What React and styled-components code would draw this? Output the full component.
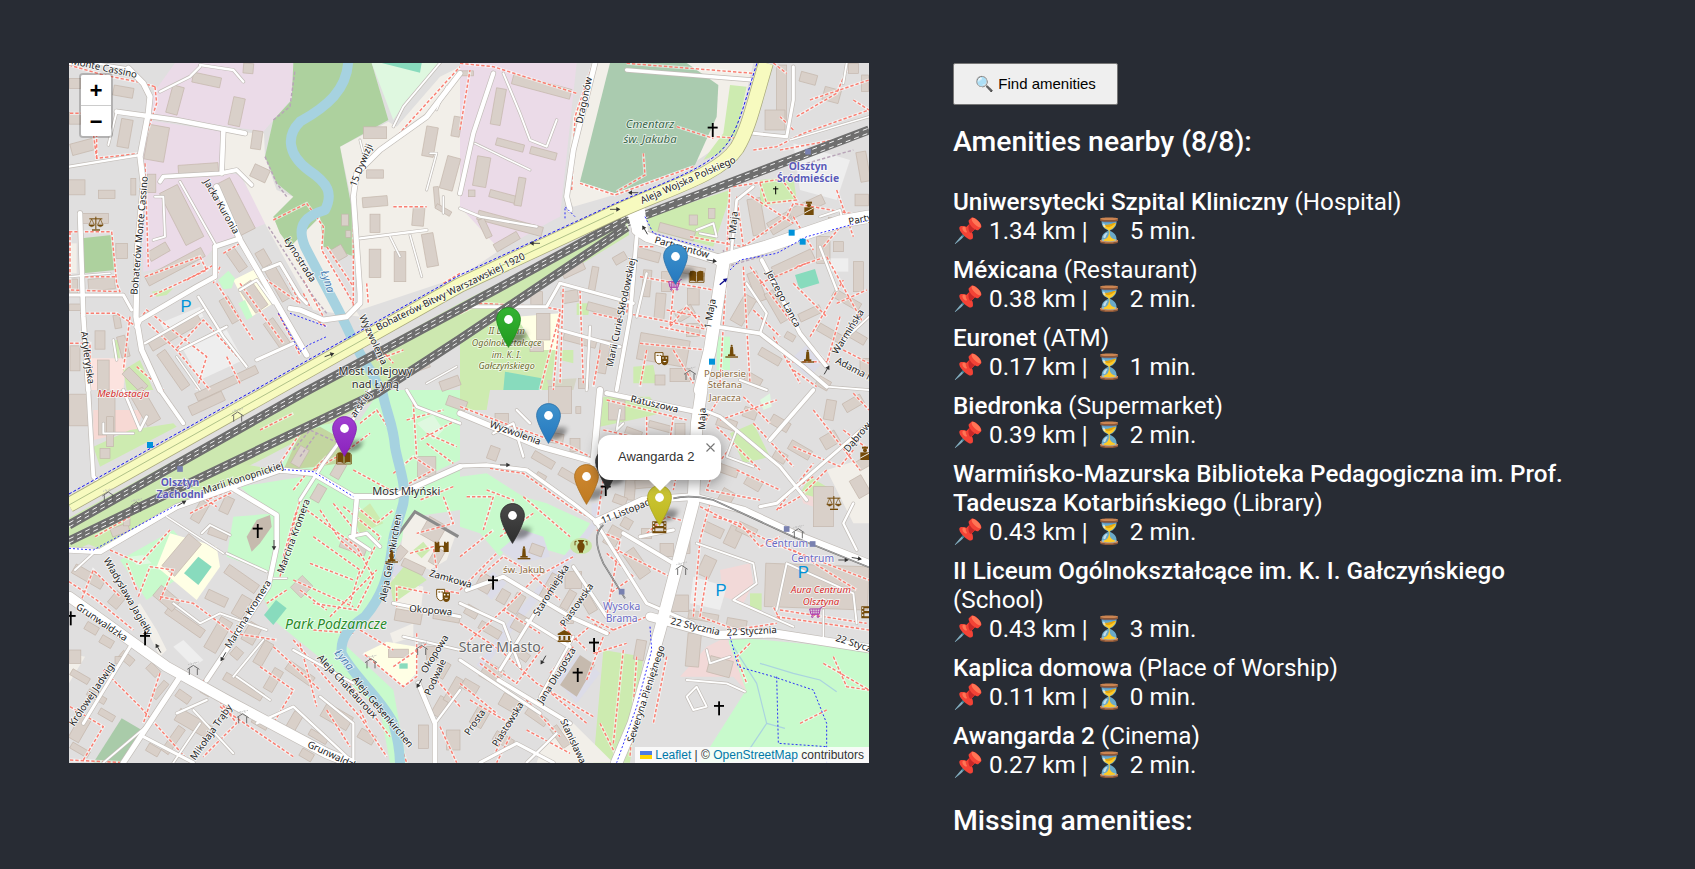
import React from "react";
import styled, { createGlobalStyle } from "styled-components";

const Global = createGlobalStyle`
  html, body { margin: 0; padding: 0; background: #282c34; }
  body { font-family: Roboto, "Liberation Sans", sans-serif; color: #fff; overflow: hidden; }
`;

const Page = styled.main`
  display: grid;
  grid-template-columns: 800px 625px;
  column-gap: 84px;
  padding: 63px 0 0 69px;
  min-height: 806px;
  background: #282c34;
`;
const MapFrame = styled.div`
  position: relative;
  width: 800px;
  height: 700px;
  overflow: hidden;
  background: #e0dfdf;
`;
const MapArt = styled.svg`
  display: block;
  width: 800px;
  height: 700px;
`;
const Side = styled.section`
  display: flex;
  flex-direction: column;
  align-items: flex-start;
`;
const FindButton = styled.button`
  width: 165px;
  height: 42px;
  padding: 0;
  background: #efefef;
  border: 1px solid #767676;
  border-radius: 2px;
  color: #000;
  font: 15px "Liberation Sans", Arial, sans-serif;
`;
const Heading = styled.h2`
  margin: ${(p) => p.$top}px 0 ${(p) => p.$bottom}px;
  font-size: 28.4px;
  line-height: 34px;
  font-weight: 500;
  color: #fff;
`;
const List = styled.div`
  display: flex;
  flex-direction: column;
  gap: 10px;
`;
const Item = styled.div`
  font-size: 24.24px;
  line-height: 29px;
  font-weight: 400;
`;
const Name = styled.strong`
  font-weight: 500;
`;

const ZoomBox = styled.div`
  position: absolute;
  left: 10px;
  top: 10px;
  border: 2px solid rgba(0, 0, 0, 0.2);
  border-radius: 4px;
  background-clip: padding-box;
`;
const ZoomBtn = styled.div`
  width: 30px;
  height: 30px;
  background: #fff;
  color: #000;
  font: bold 22px/35px "Liberation Mono", monospace;
  text-align: center;
  overflow: hidden;
  border-bottom: ${(p) => (p.$first ? "1px solid #ccc" : "none")};
  border-radius: ${(p) => (p.$first ? "2px 2px 0 0" : "0 0 2px 2px")};
`;
const Attribution = styled.div`
  position: absolute;
  right: 0;
  bottom: 0;
  padding: 0 5px;
  background: rgba(255, 255, 255, 0.8);
  color: #333;
  font: 12px/16px "Liberation Sans", Arial, sans-serif;
  white-space: nowrap;
`;
const AttrLink = styled.span`
  color: #0078a8;
`;
const Flag = styled.svg`
  display: inline-block;
  width: 12px;
  height: 8px;
  margin-right: 3px;
`;
const Pin = styled.svg`
  position: absolute;
  left: ${(p) => p.$x - 12.5}px;
  top: ${(p) => p.$y - 41}px;
  width: 45px;
  height: 41px;
  overflow: visible;
`;
const Popup = styled.div`
  position: absolute;
  left: 529px;
  top: 372px;
  width: 123px;
  height: 45px;
  box-sizing: border-box;
  padding: 13px 0 0 20px;
  background: #fff;
  border-radius: 12px;
  box-shadow: 0 3px 14px rgba(0, 0, 0, 0.4);
  color: #333;
  font: 13px/17px "Liberation Sans", Arial, sans-serif;
  white-space: nowrap;
  &::after {
    content: "";
    position: absolute;
    left: 50%;
    top: 100%;
    margin-left: -11px;
    border-left: 11px solid transparent;
    border-right: 11px solid transparent;
    border-top: 11px solid #fff;
  }
`;
const CloseX = styled.svg`
  position: absolute;
  right: 6px;
  top: 8px;
  width: 9px;
  height: 9px;
`;

/* map parts */
const Building = styled.rect`
  fill: #d9d0c9;
  stroke: #c4b6ab;
  stroke-width: 2;
`;
const Foot = styled.polyline`
  fill: none;
  stroke: ${(p) => (p.$faint ? "#b8a5b8" : "#fa7f72")};
  stroke-width: 4.4;
  stroke-dasharray: 10 6;
  stroke-linejoin: round;
`;
const FootCase = styled.polyline`
  fill: none;
  stroke: #fff;
  stroke-opacity: 0.6;
  stroke-width: 9;
`;
const Cycle = styled.polyline`
  fill: none;
  stroke: #1010ff;
  stroke-width: 2.6;
  stroke-dasharray: 6 6;
`;
const Stream = styled.polyline`
  fill: none;
  stroke: #aad3df;
  stroke-width: 3.5;
`;
const River = styled.path`
  fill: none;
  stroke: #a6d2e0;
  stroke-width: 30px;
  stroke-linecap: round;
  stroke-linejoin: round;
`;
const RoadCase = styled.polyline`
  fill: none;
  stroke: #c2bdb8;
  stroke-linecap: round;
  stroke-linejoin: round;
`;
const RoadFill = styled.polyline`
  fill: none;
  stroke: #fff;
  stroke-linecap: round;
  stroke-linejoin: round;
`;
const LABEL = {
  road: "fill:#222;font-size:29px;",
  place: "fill:#2c2c2c;font-size:33px;",
  bridge: "fill:#2c2c2c;font-size:33px;text-anchor:middle;",
  station: "fill:#5b5bb8;font-size:31px;font-weight:700;text-anchor:middle;",
  halt: "fill:#6a6ac4;font-size:31px;text-anchor:middle;",
  school: "fill:#6b6b2d;font-size:27px;font-style:italic;text-anchor:middle;",
  water: "fill:#4d80b3;font-size:33px;font-style:italic;",
  park: "fill:#2a8b2a;font-size:42px;font-style:italic;",
  brown: "fill:#8a6a3c;font-size:29px;text-anchor:middle;",
  red: "fill:#d42a2a;font-size:29px;font-style:italic;text-anchor:middle;",
  ceme: "fill:#39664a;font-size:34px;font-style:italic;text-anchor:middle;",
  town: "fill:#666;font-size:42px;text-anchor:end;",
};
const MapLabel = styled.text`
  font-family: "Noto Sans", sans-serif;
  paint-order: stroke;
  stroke: #fff;
  stroke-opacity: 0.75;
  stroke-width: 5px;
  ${(p) => LABEL[p.$kind]}
`;
const Pee = styled.text`
  font-family: "Liberation Sans", sans-serif;
  font-size: 50px;
  fill: #0092da;
  text-anchor: middle;
`;

const C = {
  pink: "#ebdbe8",
  beige: "#f2efe9",
  forest: "#add19e",
  park: "#c8facc",
  pale: "#dff8e0",
  pitch: "#88dbbd",
  cem: "#aacbaf",
  school: "#ffffe5",
  grass: "#cdebb0",
  lav: "#dcdce8",
  rose: "#f2d9d8",
  lot: "#eeeeee",
  olive: "#c3d6a0",
  church: "#c6baae",
};

const Q1 = {
  t: [-9, -13],
  areas: [
    [C.pink, "345,39 700,39 700,140 640,210 610,245 270,195 280,130"],
    [C.pink, "262,210 495,245 490,365 540,375 620,520 530,555 465,590 430,630 250,665 245,340"],
    [C.pink, "900,320 985,310 1085,385 1090,465 905,480"],
    [C.pink, "1190,490 1200,490 1200,515 1190,510"],
    [C.beige, "495,245 612,250 615,320 650,420 700,440 640,500 660,550 700,580 780,500 790,600 880,770 900,800 760,780 620,530 540,370 495,365"],
    [C.beige, "840,290 985,215 1010,230 1140,80 1200,50 1200,680 900,780 880,620 885,500"],
    [C.forest, "700,39 935,39 985,210 840,290 880,500 885,620 790,590 780,500 690,590 660,550 640,500 700,440 650,400 615,320 640,210 695,150"],
    [C.pale, "935,39 1140,39 1040,150 1000,210"],
    [C.pitch, "965,39 1085,39 1080,68"],
    [C.forest, "65,565 155,555 165,660 70,670"],
    [C.school, "520,690 590,655 640,760 575,800"],
    [C.park, "475,690 505,662 525,685 515,715 490,718"],
    [C.park, "535,760 555,750 578,800 560,810"],
    ["#fce3df", "85,925 200,925 190,1020 85,1020"],
    [C.grass, "190,960 240,930 280,1020 200,1020"],
    [C.grass, "275,725 340,715 320,735 290,740"],
    [C.beige, "30,580 50,580 50,670 30,670"],
    [C.lot, "300,820 420,770 430,800 320,850"],
    [C.lot, "370,900 500,840 550,930 420,990"],
    [C.grass, "160,870 175,870 180,925 162,925"],
  ],
  bld: [
    [440, 90, 85, 30, 12], [565, 55, 30, 30, 5], [345, 150, 35, 85, 15], [530, 185, 35, 85, 12], [190, 125, 60, 30, 10],
    [45, 100, 35, 30, 0], [45, 205, 35, 35, 0], [195, 250, 35, 85, 10], [70, 290, 75, 35, -15], [290, 280, 60, 105, 10],
    [415, 357, 120, 30, -4], [50, 412, 50, 45, 0], [140, 433, 50, 25, 0], [220, 410, 15, 50, 0], [275, 400, 25, 55, 0],
    [365, 495, 60, 175, -27], [525, 470, 50, 170, -27], [590, 270, 30, 55, 8], [600, 370, 50, 40, 25], [945, 248, 70, 35, 0],
    [1110, 275, 35, 90, 10], [945, 372, 50, 25, 0], [945, 455, 75, 30, -5], [1170, 370, 40, 100, 15], [945, 520, 30, 55, 0],
    [1075, 500, 35, 55, 5], [855, 510, 20, 35, 0], [835, 610, 40, 40, -30], [865, 552, 15, 20, 0], [945, 640, 35, 85, 0],
    [1020, 650, 35, 90, 0], [1110, 600, 35, 100, -10], [105, 505, 80, 30, 0], [185, 603, 35, 45, 0], [295, 605, 65, 30, -30],
    [125, 702, 80, 35, -5], [40, 712, 25, 50, 0], [45, 772, 35, 20, 0], [530, 630, 30, 70, -35], [610, 625, 30, 50, -30],
    [655, 700, 35, 110, -30], [580, 740, 45, 90, -35], [510, 780, 30, 80, -30], [650, 850, 35, 90, -35], [120, 870, 30, 55, 0],
    [45, 925, 30, 75, 0], [172, 815, 20, 40, -10], [190, 890, 25, 65, -15], [345, 650, 190, 30, -28], [345, 848, 170, 30, -30],
    [130, 975, 35, 90, 0], [225, 990, 80, 30, 45], [340, 960, 30, 130, -35], [500, 1000, 200, 25, -25], [1170, 1000, 60, 30, -20],
    [1130, 440, 15, 60, -5], [40, 40, 60, 10, 0], [1150, 480, 50, 15, 30], [1190, 230, 25, 60, 10], [1090, 950, 40, 15, -20],
  ],
  foot: [
    "27,45 130,75 230,95 285,110", "285,110 290,160 240,310 110,325 100,250", "255,340 265,650", "27,545 155,545 170,700 180,725 30,720",
    "75,680 170,680", "490,610 540,580 590,670 720,760", "640,510 740,460 790,530 785,600 880,760", "880,770 880,380 900,350 1000,270 1200,50",
    "920,700 925,760", "255,680 420,620 440,660 270,740", "230,820 260,780 440,920 410,1020", "265,820 350,900 450,1020", "350,895 430,810 560,950",
    "660,640 720,760", "655,790 720,915", "720,780 800,830", "1150,700 1200,670", "950,930 1030,900", "730,730 750,770",
    "420,640 395,650", "30,545 30,720", "500,920 540,1000", "110,325 110,250", "30,190 70,190", "800,590 880,710", "265,940 300,1020", "965,900 1000,940",
    "480,650 460,700", "60,790 170,790 230,830", "30,880 90,880 90,1020", "210,800 190,960", "230,950 310,1020", "380,690 470,640", "470,700 580,870",
    "540,700 670,880", "730,690 790,800", "1000,470 1100,470",
  ],
  faint: ["615,320 650,400 680,440", "625,530 760,740 800,790", "640,210 690,170 705,60"],
  road: [
    [14, "205,55 250,100 270,140 265,190 240,320 250,400 232,600 228,800 245,900 300,1020"], [6, "30,42 120,42 205,55"],
    [12, "170,185 350,210 555,250"], [5, "170,185 145,285"], [6, "27,350 240,315"], [12, "490,245 485,370"],
    [10, "300,395 310,380 480,370 530,360 575,405"], [5, "360,395 470,590"], [14, "470,410 540,570 650,760 740,915"],
    [12, "465,590 540,565"], [12, "465,590 465,680 410,710 240,810 230,830"], [12, "60,490 70,800 85,1020"],
    [8, "27,735 190,735 215,780"], [4, "27,680 150,670"], [8, "610,660 660,640 720,740 740,760"], [6, "540,720 590,690 640,760"],
    [13, "690,775 720,780 790,810 860,800 900,760 900,730 880,440 890,370 960,300 1100,200 1200,70"], [6, "900,565 1100,540"],
    [4, "990,560 1020,620"], [4, "1050,555 1085,680"], [4, "1110,310 1130,310 1100,420"], [3, "1130,180 1160,110"], [6, "420,50 390,80 300,125"],
    [6, "420,45 520,60 550,95"], [5, "1000,230 1030,170 1140,39"], [4, "900,270 915,330"], [6, "415,740 490,860 560,950"], [6, "360,900 500,830"],
    [8, "590,930 700,880"], [6, "255,880 430,780"], [4, "350,920 420,1020"], [5, "285,440 310,440 315,560 280,570"], [4, "1150,440 1150,490"],
    [5, "160,870 170,930"], [4, "1100,1000 1190,950"],
  ],
  cyc: ["655,790 720,905 745,885 800,860", "690,790 800,830"],
  labels: [
    ["Monte Cassino", 32, 42, 12, "road"], ["Bohaterów Monte Cassino", 232, 735, -85, "road"], ["Artyleryjska", 62, 845, 82, "road"],
    ["Jacka Kuronia", 430, 395, 60, "road"], ["Łynostrada", 672, 570, 58, "road"], ["Łyna", 782, 665, 72, "water"],
    ["15 Dywizji", 887, 412, -68, "road"], ["Wyzwolenia", 897, 800, 65, "road"],
    ["Most kolejowy", 946, 975, 0, "bridge"], ["nad Łyną", 946, 1015, 0, "bridge"],
  ],
  icons: [["scales", 108, 522], ["arrow", 808, 915, -20]],
  pees: [[378, 785]],
};

const Q2 = {
  t: [391, -13],
  areas: [
    [C.pink, "0,39 350,39 300,500 280,510 120,600 0,680"],
    [C.beige, "0,470 120,600 0,680"],
    [C.beige, "400,39 880,39 830,250 700,340 480,430 340,470 315,430 340,200"],
    [C.cem, "450,39 680,39 775,105 770,200 705,345 465,430 360,395"],
    [C.grass, "810,105 860,110 830,250 780,310 730,330 790,250"],
    [C.grass, "560,500 810,420 810,440 760,590 570,540"],
    [C.grass, "0,840 40,820 170,800 230,900 290,900 270,1020 0,1020"],
    [C.school, "170,800 300,790 290,900 230,900"],
    [C.pitch, "135,965 245,985 240,1020 130,1020"],
    [C.pitch, "1005,675 1065,657 1078,700 1018,718"],
    [C.lav, "1045,880 1095,930 1045,985 990,930"],
    [C.park, "770,860 810,860 810,960 770,960"],
    [C.grass, "900,390 1000,380 1010,450 900,470"],
    [C.lot, "1110,625 1165,625 1165,665 1110,665"],
    [C.lot, "1000,280 1170,330 1130,450 1020,420"],
    ["#d5d5c5", "260,990 350,985 340,1020 270,1020"],
    [C.grass, "350,760 390,760 385,795 350,795"],
    [C.grass, "520,950 580,945 590,1000 520,1000"],
    [C.grass, "300,900 340,900 340,940 300,930"],
  ],
  bld: [
    [245, 110, 180, 30, 15], [115, 170, 30, 110, 10], [150, 285, 85, 22, 15], [250, 310, 80, 22, 15], [130, 440, 85, 22, 15],
    [180, 425, 22, 85, 10], [150, 520, 200, 28, 15], [140, 575, 80, 25, -30], [75, 535, 20, 60, -25], [35, 430, 20, 20, 0],
    [65, 365, 40, 90, 10], [15, 70, 50, 15, 0], [965, 130, 30, 170, 0], [1045, 85, 50, 30, 15], [1115, 135, 50, 40, 15],
    [1180, 55, 30, 30, 0], [945, 210, 60, 60, 0], [1215, 100, 20, 50, 0], [1210, 350, 30, 90, -10], [890, 500, 40, 110, -10],
    [960, 520, 70, 40, -30], [1040, 470, 110, 30, -25], [1205, 450, 40, 35, 0], [650, 545, 110, 28, 15], [755, 490, 20, 30, 0],
    [700, 510, 25, 30, 0], [565, 615, 70, 30, 15], [690, 660, 90, 25, 10], [620, 695, 30, 60, 0], [700, 740, 35, 50, 0],
    [600, 770, 30, 80, 5], [675, 790, 55, 30, -30], [700, 840, 40, 40, 0], [340, 660, 70, 25, -25], [480, 625, 40, 25, -30],
    [400, 690, 20, 80, 10], [330, 740, 50, 35, -10], [230, 745, 35, 40, 0], [430, 780, 100, 25, 15], [560, 700, 25, 80, 5],
    [610, 900, 150, 80, 10], [660, 975, 60, 40, 0], [430, 920, 30, 100, 10], [360, 870, 100, 25, 15], [890, 710, 30, 90, -20],
    [850, 780, 40, 90, 30], [1000, 640, 130, 35, -25], [1090, 600, 40, 80, 0], [1135, 590, 30, 30, 0], [1195, 680, 30, 90, 0],
    [1160, 750, 90, 25, 30], [1110, 850, 80, 25, 30], [1050, 790, 70, 25, -25], [930, 920, 70, 25, 30], [950, 770, 30, 100, -30],
    [1190, 860, 60, 25, 30], [1215, 950, 30, 50, 0], [1090, 1000, 40, 30, 30], [250, 830, 40, 80, 0], [880, 990, 50, 30, 30],
    [370, 1000, 30, 30, 0], [1125, 510, 40, 15, 0], [230, 890, 40, 30, 0], [990, 860, 30, 20, 30], [600, 990, 30, 30, 0],
  ],
  foot: [
    "335,420 345,200 400,39", "360,400 465,435 700,350", "550,310 555,375 470,425", "650,230 760,265", "770,260 830,265", "880,300 950,290 1030,250 1227,180",
    "1010,200 1130,130 1160,60", "940,39 980,70", "810,400 800,620", "820,410 1010,380", "900,400 920,460 1010,450 960,380", "580,590 530,590 500,790 750,840",
    "540,680 760,720", "640,720 630,830 680,770 730,830", "620,780 720,800", "510,810 470,1000", "600,830 740,860 720,1000", "830,440 850,590",
    "850,590 980,500 1000,460 1227,500", "1090,590 1150,520", "850,650 870,1000", "870,650 1020,850 1100,940", "980,935 1110,935", "1140,800 1100,940",
    "1100,620 1210,820", "1010,650 1100,620", "1050,860 1150,690", "0,790 60,760 250,770 300,780 280,1020", "300,790 240,1020", "0,40 100,50 350,130",
    "500,40 880,70", "1180,150 1227,180", "750,860 735,1020", "940,860 1020,1000", "1130,420 1180,560", "1000,240 960,200", "0,240 30,60",
    "310,700 300,1000", "360,720 370,1000", "400,790 490,810", "420,900 400,1010", "540,880 740,900", "560,900 540,1010", "640,900 700,1000", "780,1000 800,650",
    "880,780 960,860", "900,700 1040,640", "1130,760 1220,720", "1000,700 1100,800", "1150,900 1227,940", "1000,960 1070,1010", "600,450 720,400", "1050,150 1227,90",
    "960,300 1227,250", "860,430 1000,520", "690,560 900,600", "1000,500 1060,600",
  ],
  faint: ["790,600 800,650 900,620", "1040,340 1180,300"],
  road: [
    [13, "405,39 340,300 320,440 330,480"], [11, "100,70 40,250 0,430"], [5, "130,70 180,190 210,270 260,290 290,210"], [4, "45,280 210,360"],
    [6, "0,475 60,500 230,530"], [9, "500,60 880,90"], [8, "880,250 980,260 1000,150 1000,50"], [4, "990,270 1227,200"], [5, "1160,39 1150,100"],
    [26, "530,540 560,560 780,630"], [32, "780,630 920,590 1140,515 1227,500"], [32, "790,640 750,900 720,1020"], [7, "815,600 830,450 880,410"],
    [10, "530,560 510,800 470,1020"], [8, "300,700 520,760"], [8, "300,840 480,890"], [6, "390,830 380,1020"], [8, "300,700 260,770 0,770"],
    [6, "560,670 530,800"], [5, "710,540 760,520 770,560 720,550"], [10, "770,830 900,850 1030,950 1100,1010"], [6, "860,700 920,790 900,850"],
    [5, "1120,900 1227,800"], [5, "1080,500 1140,480 1150,520"], [10, "905,630 1020,850 1100,950"], [6, "1080,590 1130,720"], [5, "1100,1010 1227,1020"], [6, "840,990 920,1020"],
  ],
  cyc: ["555,500 580,550 760,600", "810,660 840,630 950,610 1040,560 1227,510", "315,505 315,470 345,500"],
  labels: [
    ["Dragonów", 367, 222, -78, "road"], ["Cmentarz", 570, 235, 0, "ceme"], ["św. Jakuba", 570, 278, 0, "ceme"], ["Aleja Wojska Polskiego", 547, 462, -24, "road"],
    ["Olsztyn", 1044, 360, 0, "station"], ["Śródmieście", 1044, 395, 0, "station"], ["Partyzantów", 582, 578, 16, "road"], ["1 Maja", 825, 575, -85, "road"],
    ["Party", 1168, 525, -12, "road"], ["1 Maja", 752, 837, -80, "road"], ["Jerzego Lanca", 917, 668, 62, "road"], ["Warmińska", 1132, 915, -58, "road"],
    ["Adama M", 1125, 938, 28, "road"], ["Marii Curie-Skłodowskiej", 458, 952, -78, "road"], ["II Liceum", 140, 853, 0, "school"], ["Ogólnokształcące", 140, 888, 0, "school"],
    ["im. K. I.", 140, 923, 0, "school"], ["Gałczyńskiego", 140, 958, 0, "school"], ["Popiersie", 795, 980, 0, "brown"], ["Stefana", 795, 1015, 0, "brown"],
    ["Bohaterów Bitwy Warszawskiej 1920", -246, 842, -26, "road"],
  ],
  icons: [
    ["cross", 758, 240], ["crossS", 947, 421], ["book", 710, 680], ["masks", 605, 925], ["person", 1047, 475], ["monument", 815, 905], ["monument", 1043, 920],
    ["cart", 645, 705], ["hut", 690, 975], ["sq", 995, 548], ["sq", 1028, 575], ["sq", 756, 935], ["st", 1044, 305],
    ["arrow", 520, 428, 180], ["arrow", 465, 478, 0], ["arrow", 225, 580, 180], ["arrow", 555, 540, -120], ["arrow", 755, 632, 10], ["navy", 790, 695, -40], ["arrow", 1100, 960, -60],
  ],
  pees: [],
};

const Q3 = {
  t: [-9, 327],
  areas: [
    [C.park, "660,230 740,110 900,90 960,0 1200,0 1200,210 1030,290 900,320 760,250"],
    [C.olive, "670,240 720,130 780,110 850,150 840,220 770,230"],
    [C.park, "540,290 760,255 900,325 1030,300 1200,230 1200,360 1060,380 1000,500 950,640 850,760 1000,900 1040,1118 990,1118 960,960 800,820 640,690 600,600 640,550 640,380"],
    [C.park, "520,380 650,370 640,550 500,500"],
    [C.church, "560,440 590,390 630,375 635,410 600,460 575,485"],
    [C.grass, "500,215 660,240 440,310 130,480 27,440"],
    [C.park, "180,510 340,420 420,520 260,630"],
    [C.school, "330,430 470,470 480,530 410,630 290,530"],
    [C.pitch, "415,500 455,530 415,585 372,550"],
    [C.pitch, "648,630 680,655 640,705 612,675"],
    [C.pale, "210,500 250,495 275,520 230,525"],
    [C.pale, "1070,100 1120,75 1150,120 1120,150"],
    [C.school, "910,790 980,755 1070,770 1070,850 1030,890"],
    [C.pitch, "1018,820 1043,820 1043,836 1018,836"],
    ["#a9cba9", "100,1118 185,985 245,1020 185,1118"],
    [C.beige, "27,790 75,800 27,880"],
    [C.beige, "240,640 290,720 320,780 300,800 225,650"],
    ["#f7d9d4", "100,60 250,60 230,120 100,150"],
    [C.grass, "100,170 210,120 340,100 350,110 120,230"],
    [C.beige, "1000,560 1090,590 1080,690 1010,680"],
    [C.lav, "1000,520 1100,560 1080,590 990,550"],
    [C.beige, "1030,420 1065,370 1185,440 1160,510 1110,540 1020,500"],
    [C.grass, "1060,480 1090,455 1110,480 1085,505"],
    [C.grass, "990,580 1040,520 1100,570 1000,640"],
    [C.lot, "340,770 400,830 430,810 370,750"],
    [C.beige, "990,730 1060,700 1060,740 1000,760"],
    [C.grass, "880,380 930,340 970,400 900,430"],
  ],
  bld: [
    [60, 60, 65, 95, 0], [140, 70, 50, 130, 0], [255, 50, 45, 110, -30], [440, 40, 110, 30, -25], [135, 190, 30, 30, 0],
    [180, 420, 55, 25, -20], [200, 395, 20, 25, 0], [420, 365, 30, 65, 30], [500, 345, 30, 50, 25], [475, 430, 60, 25, 20],
    [365, 495, 50, 125, 40], [545, 567, 110, 30, 35], [470, 625, 65, 30, 25], [545, 650, 35, 65, 30], [475, 735, 40, 105, 30],
    [575, 730, 40, 60, 30], [610, 790, 30, 75, 30], [530, 790, 30, 30, 40], [375, 695, 130, 28, 35], [320, 625, 40, 75, -50],
    [85, 560, 100, 30, 30], [170, 630, 35, 45, 40], [95, 715, 40, 25, 30], [140, 755, 40, 25, 30], [45, 800, 35, 40, 0],
    [200, 805, 45, 25, 40], [280, 840, 40, 25, 45], [175, 810, 20, 20, 0], [60, 860, 60, 20, 30], [110, 920, 60, 20, 30],
    [60, 1015, 35, 80, 30], [140, 975, 50, 20, 30], [60, 1080, 60, 20, 30], [300, 900, 60, 20, -50], [370, 920, 45, 25, 35],
    [400, 1000, 110, 40, 30], [440, 900, 30, 30, 30], [550, 890, 130, 25, 30], [640, 870, 30, 70, 30], [720, 850, 90, 30, 35],
    [600, 1000, 50, 20, 30], [700, 1000, 30, 70, 30], [830, 980, 90, 45, 30], [920, 1040, 50, 30, 30], [775, 1040, 60, 20, 30],
    [740, 1095, 40, 25, 30], [340, 1050, 90, 25, -55], [280, 1080, 40, 25, 30], [1090, 1040, 30, 70, 0], [1140, 950, 30, 60, 30],
    [1180, 900, 25, 80, 30], [1150, 840, 25, 50, 30], [1180, 1050, 40, 60, 0], [1045, 680, 80, 35, 10], [1100, 230, 55, 60, 0],
    [775, 310, 30, 50, 30], [835, 240, 30, 50, 30], [725, 590, 45, 50, 45], [880, 470, 80, 30, 20], [1020, 490, 30, 40, 40],
    [1120, 420, 60, 60, 30], [1060, 530, 70, 25, 25], [1130, 500, 30, 50, 30], [720, 200, 30, 60, 30], [1160, 680, 80, 25, 10],
    [150, 125, 20, 90, 0], [1190, 40, 60, 30, 20], [1115, 790, 30, 40, 0], [1015, 790, 60, 25, 0],
  ],
  foot: [
    "660,560 720,330", "670,500 710,360", "700,300 740,250", "740,360 890,470 940,560 890,660 760,640", "760,440 900,540 870,640", "750,520 880,570",
    "720,600 800,660", "810,680 950,540", "880,240 990,300", "800,200 760,240 850,190 930,130", "890,350 950,400 1000,360", "1000,250 1060,200 1120,240 1030,290",
    "1040,90 1150,60", "1060,40 1070,200", "1190,90 1080,150", "235,620 270,530 340,540 300,630", "230,600 200,520", "150,480 240,520 330,420",
    "700,750 820,890 900,980 980,1100", "720,760 770,950", "860,870 990,1040", "1000,1000 1040,1118", "900,960 920,1000", "27,575 110,630 220,720",
    "300,620 400,640 520,730 650,750", "30,1110 200,1118", "130,840 240,950 390,1118", "240,780 370,860", "420,880 620,1000", "640,770 780,900", "900,720 1000,780",
    "1070,730 1070,860 1030,890 910,790", "1010,650 1010,590 1110,610", "1050,490 1120,470 1130,540", "660,220 720,130", "900,100 950,60 990,120", "1140,600 1200,610",
    "600,120 700,70", "105,440 210,380", "680,600 620,640", "840,770 900,700", "760,720 880,730", "1000,120 1030,250", "1100,130 1190,170",
    "60,640 100,540 180,620", "300,850 250,1000", "430,870 530,1000 430,1100", "480,950 700,1100", "600,830 700,900 640,1000", "800,960 870,1070", "30,950 130,1010 70,1110",
    "1130,870 1200,950", "1140,1010 1190,1118", "1000,830 1100,760", "700,570 880,650", "780,360 840,450 900,500", "820,340 900,440", "850,350 960,440 900,560",
    "1100,160 1180,220", "1180,290 1080,330", "1150,320 1180,400 1070,430", "560,280 440,330 470,350", "390,370 530,300",
  ],
  faint: ["700,180 750,120 860,170", "720,200 770,130"],
  road: [
    [14, "27,480 120,485 350,350 660,240 760,250 880,320 1000,320 1200,230"], [8, "930,0 850,140 790,220 720,330"],
    [12, "510,290 650,375 650,470 625,590 480,810 440,870"], [5, "500,490 620,545"], [5, "425,430 450,405 510,435"], [26, "27,620 320,830 500,930 800,1090 870,1118"],
    [12, "880,440 890,330"], [8, "870,440 920,430 960,470"], [8, "870,440 930,480"], [5, "45,540 100,490"], [8, "210,770 70,1000"], [14, "360,860 190,1118"],
    [8, "250,1040 400,1118"], [5, "340,640 420,700 480,670 620,720"], [6, "350,970 440,930"], [5, "610,750 520,860"], [5, "530,860 630,930"], [6, "700,780 880,880"],
    [6, "590,1000 700,950 880,1118"], [6, "780,920 880,1000 880,1118"], [8, "1000,640 1200,680"], [6, "1030,740 1200,780"], [12, "1075,880 1125,1000 1125,1118"],
    [6, "1125,1000 1200,900"], [5, "400,960 520,1090"], [4, "640,565 680,565"], [4, "320,380 490,490"], [10, "85,0 100,260 110,270"], [10, "300,0 370,100"],
    [7, "190,0 240,120 260,80"], [5, "130,100 130,130 220,130"], [7, "1040,0 1070,50 1200,100"], [5, "420,1000 340,1118"], [5, "270,1000 130,1118"],
  ],
  cyc: ["27,475 100,480 350,345", "660,238 760,245 880,320"],
  labels: [
    ["Meblostacja", 190, 20, 0, "red"], ["Olsztyn", 360, 288, 0, "station"], ["Zachodni", 360, 323, 0, "station"], ["Marii Konopnickiej", 433, 312, -18, "road"],
    ["Most Młyński", 937, 315, 0, "place"], ["Marcina Kromera", 670, 552, -70, "road"], ["Marcina Kromera", 510, 777, -58, "road"], ["Aleja Gelsenkirchen", 978, 637, -80, "road"],
    ["Zamkowa", 1106, 558, 16, "road"], ["Okopowa", 1047, 665, 5, "road"], ["Park Podzamcze", 675, 717, 0, "park"], ["Łyna", 822, 790, 50, "water"], ["Aleja Chateauroux", 770, 805, 47, "road"],
    ["Aleja Gelsenkirchen", 875, 870, 50, "road"], ["Okopowa", 1098, 852, -58, "road"], ["Podwale", 1110, 918, -65, "road"], ["Grunwaldzka", 46, 655, 34, "road"],
    ["Władysława Jagiełły", 130, 510, 60, "road"], ["Królowej Jadwigi", 42, 1010, -56, "road"], ["Mikołaja Trąby", 405, 1112, -55, "road"], ["Grunwaldzka", 740, 1070, 25, "road"],
    ["arskiej", 885, 85, -55, "road"],
  ],
  icons: [
    ["cross", 593, 423], ["cross", 255, 745], ["cross", 32, 685], ["book", 852, 205], ["masks", 1150, 615], ["monument", 995, 500], ["castle", 1145, 470],
    ["hut", 533, 80], ["hut", 145, 320], ["hut", 230, 350], ["hut", 400, 840], ["hut", 933, 820], ["hut", 548, 985], ["hut", 1085, 780], ["sq", 270, 165], ["st", 360, 237],
    ["arrow", 365, 340, -30], ["arrow", 642, 465, 90], ["arrow", 295, 775, -120], ["arrow", 490, 800, 120], ["arrow", 1078, 880, 120],
  ],
  pees: [],
};

const Q4 = {
  t: [391, 327],
  areas: [
    [C.park, "0,260 80,250 190,320 260,340 390,400 330,500 230,470 180,410 120,500 60,430 0,410"],
    [C.lav, "190,420 250,440 270,500 180,520 120,480"],
    [C.lav, "395,340 420,340 415,400 330,520 165,710 70,840 50,825 150,690 310,500 395,400"],
    [C.lav, "290,870 355,790 420,850 350,940"],
    [C.church, "300,885 360,795 405,825 350,920"],
    [C.lav, "50,580 100,545 140,580 95,630"],
    [C.park, "810,740 1227,780 1227,1070 800,1118 720,1118 855,905 800,790"],
    [C.rose, "740,770 800,740 860,905 820,860 660,860"],
    [C.rose, "780,540 870,520 880,580 850,640 790,620"],
    [C.grass, "430,780 550,800 510,1118 400,1118"],
    [C.beige, "250,1060 340,1000 460,1118 230,1118"],
    [C.lot, "700,560 800,590 780,660 690,640"],
    [C.pale, "900,30 930,10 935,50 910,60"],
    [C.grass, "810,130 880,100 930,200 850,220"],
    [C.grass, "870,610 905,610 905,660 870,660"],
    [C.grass, "1050,260 1100,290 1060,340 1020,310"],
    ["#f2d9d8", "1020,310 1060,320 1060,350 1030,340"],
    [C.grass, "0,0 90,0 80,60 0,60"],
    [C.beige, "1100,240 1227,200 1227,400 1180,400"],
    [C.grass, "420,110 560,80 600,70 570,20 430,20"],
  ],
  stream: ["820,770 890,880 920,1000 860,1090", "900,820 1000,850 1080,870 1130,905", "920,1000 975,1015"],
  bld: [
    [300, 30, 70, 80, 0], [355, 60, 15, 20, 0], [345, 165, 30, 40, 0], [290, 145, 40, 30, 10], [125, 95, 40, 50, 0], [100, 190, 30, 40, 20],
    [250, 210, 70, 25, 30], [330, 260, 70, 25, 30], [240, 265, 30, 30, 30], [470, 60, 50, 60, 0], [520, 130, 50, 25, 20], [600, 110, 70, 20, 15],
    [660, 120, 30, 40, 0], [510, 300, 30, 60, 5], [570, 280, 90, 25, -5], [480, 330, 40, 25, 20], [460, 440, 40, 60, 30], [530, 520, 40, 90, -35],
    [560, 430, 30, 30, 0], [620, 480, 40, 40, 0], [500, 400, 30, 30, 30], [760, 420, 60, 30, 25], [820, 440, 40, 60, 25], [860, 420, 60, 30, 25],
    [740, 530, 40, 60, 25], [660, 640, 50, 50, 0], [730, 680, 90, 25, 10], [830, 700, 60, 25, 10], [700, 780, 40, 100, 5], [780, 830, 70, 50, 15],
    [590, 770, 30, 30, 0], [800, 100, 60, 30, 20], [870, 70, 40, 30, 20], [960, 100, 60, 30, 30], [1020, 180, 70, 30, 30], [960, 200, 40, 30, 30],
    [1110, 60, 30, 60, 10], [1180, 40, 60, 30, -30], [1110, 150, 50, 40, -30], [800, 240, 70, 25, 20], [880, 280, 50, 30, 30], [800, 320, 40, 40, 30],
    [1090, 350, 60, 120, 0], [1200, 290, 40, 60, -30], [1210, 220, 40, 30, -30], [1070, 590, 310, 130, 2], [230, 480, 40, 30, 20], [75, 580, 45, 50, 30],
    [130, 620, 30, 40, 30], [170, 640, 30, 60, 30], [270, 590, 30, 80, 30], [325, 630, 25, 60, 30], [35, 665, 40, 30, 30], [90, 720, 70, 25, 30],
    [180, 700, 40, 50, 30], [180, 790, 60, 25, 35], [95, 850, 60, 50, 30], [30, 890, 50, 30, 30], [150, 940, 60, 40, 30], [230, 980, 70, 25, 35],
    [60, 980, 40, 60, 30], [130, 1050, 60, 30, 30], [330, 690, 20, 20, 0], [340, 570, 50, 50, 0], [385, 640, 30, 60, -30], [300, 1040, 25, 70, -35],
    [540, 780, 30, 60, 10], [680, 470, 20, 40, 0],
  ],
  foot: [
    "0,50 160,110 330,170 390,200", "90,235 190,250 330,350 410,395", "80,300 160,330 130,420", "20,320 100,320 70,420", "120,440 220,370", "190,320 330,440",
    "430,270 410,400", "410,400 560,340", "410,420 480,450 440,680", "450,470 630,560 600,720", "750,340 720,450 700,680", "720,350 940,460", "940,460 1227,570",
    "950,360 1060,220", "1100,240 1020,320 950,360", "1000,170 1140,230 1180,180", "770,110 900,240", "780,90 950,30", "1060,60 1200,240", "1180,10 1227,60", "830,240 960,300",
    "720,120 780,20", "440,30 680,90", "430,120 700,180", "560,80 560,200", "640,80 620,220", "660,200 640,300", "430,190 650,240",
    "950,680 1227,720", "960,690 940,650", "1090,820 1227,900", "870,760 830,800 860,880", "1020,1000 1100,960",
    "490,780 460,1060", "530,800 510,1100", "400,790 500,760", "0,500 100,420", "0,600 110,490", "0,700 120,780 230,880 400,980", "300,700 380,780", "60,820 190,920 300,1040",
    "250,890 380,1000", "0,880 110,970", "380,680 460,720", "460,720 560,680", "420,1000 470,1100", "150,1040 110,1118", "620,800 580,1000", "1000,300 1060,260",
    "60,560 130,500 200,540 300,630", "130,660 230,560 340,500", "20,760 130,660 240,730", "250,770 170,880 60,800", "330,760 400,700 450,730", "30,930 150,1000 100,1100", "200,1020 330,1090",
    "380,870 430,740", "270,850 340,770", "440,490 520,560 450,610", "560,430 620,380 700,400", "760,380 840,400 900,470 960,440", "740,560 720,680 830,720", "820,720 950,700", "1000,480 1190,600",
    "960,660 1220,700", "820,160 760,240 740,300 900,330", "880,100 1000,230", "850,20 930,100", "1150,120 1227,180", "1120,800 1160,890 1227,900",
  ],
  faint: [],
  road: [
    [14, "0,70 240,170 420,220"], [9, "0,228 80,225 200,240 340,340 410,395"], [18, "410,395 550,330 700,320 850,360 1000,430 1227,520"], [30, "725,0 710,100 700,340 600,720 520,1000 470,1118"],
    [22, "570,680 770,735 940,730 1227,775"], [12, "440,10 730,70"], [8, "730,60 780,80 960,230 1040,330"], [8, "1227,100 950,340 900,350"], [10, "1060,0 930,150"], [16, "420,0 400,220"],
    [6, "190,200 160,100 100,130"], [6, "170,60 210,100"], [10, "20,600 130,560 330,680 440,730"], [8, "340,530 440,680"], [8, "200,690 330,770"], [10, "115,870 330,1000"],
    [6, "340,740 240,920"], [8, "0,810 240,970"], [8, "120,840 230,660"], [8, "60,1118 170,1060 280,1118"], [8, "410,400 560,640 700,700"], [10, "490,430 640,520"], [8, "540,440 640,420"],
    [5, "710,460 880,520 890,580 820,630 1000,710"], [5, "950,660 980,520 1180,610 1190,700"], [4, "1090,660 1090,740"], [5, "680,870 800,880 855,905"], [5, "740,780 750,820 810,800"],
    [5, "680,920 710,890 740,950 700,960 680,920"], [7, "0,640 130,700 180,830"], [6, "290,1030 200,1118"], [6, "1180,340 1150,400 1190,480"], [5, "480,60 470,120 490,100"], [5, "830,120 800,200 880,230"],
  ],
  cyc: ["810,740 835,830 940,860 1060,900 1100,1000 1100,1118", "570,710 575,780 530,950 470,1118", "950,860 955,1060 1100,1070"],
  labels: [
    ["Jaracza", 795, 32, 0, "brown"], ["Wyzwolenia", 87, 110, 20, "road"], ["Ratuszowa", 510, 35, 13, "road"], ["Maja", 735, 120, -88, "road"], ["Dąbrow", 1165, 188, -50, "road"],
    ["11 Listopada", 428, 402, -22, "road"], ["św. Jakub", 192, 550, 0, "brown"], ["Centrum", 980, 470, 0, "halt"], ["Centrum", 1058, 515, 0, "halt"], ["Aura Centrum", 1083, 610, 0, "red"],
    ["Olsztyna", 1083, 645, 0, "red"], ["Wysoka", 485, 660, 0, "halt"], ["Brama", 485, 695, 0, "halt"], ["22 Stycznia", 630, 702, 13, "road"], ["22 Stycznia", 800, 737, -3, "road"],
    ["22 Stycz", 1125, 752, 18, "road"], ["Stare Miasto", 242, 785, 0, "town"], ["Staromiejska", 235, 680, -58, "road"], ["Piastowska", 315, 712, -55, "road"], ["Jana Długosza", 247, 943, -58, "road"],
    ["Seweryna Pieniężnego", 520, 1060, -72, "road"], ["Piastowska", 112, 1072, -58, "road"], ["Prosta", 28, 1038, -55, "road"], ["Stanisława", 300, 992, 65, "road"],
  ],
  icons: [
    ["cross", 99, 578], ["cross", 402, 765], ["cross", 353, 855], ["cross", 777, 955], ["cross", 437, 297], ["scales", 1122, 340], ["monument", 192, 490], ["vase", 363, 468],
    ["film", 598, 412], ["film", 1225, 667], ["temple", 313, 738], ["cart", 1068, 667], ["hut", 665, 540], ["hut", 1015, 430], ["st", 485, 605], ["st", 980, 417], ["st", 1058, 462],
    ["arrow", 135, 225, 0], ["arrow", 250, 810, 120], ["arrow", 1150, 510, 0], ["arrow", 1190, 505, 10], ["person", 1215, 190],
  ],
  pees: [[783, 617], [1030, 565]],
};
const QUADS = [Q1, Q2, Q3, Q4];

const BROWN = "#734a08";
function Icon({ kind, x, y, rot = 0 }) {
  const at = `translate(${x} ${y})`;
  switch (kind) {
    case "cross":
      return <g transform={at} fill="#000"><rect x="-2.5" y="-21" width="5.5" height="42" /><rect x="-15" y="-10" width="30" height="5.5" /></g>;
    case "crossS":
      return <g transform={at} fill="#000"><rect x="-1.5" y="-12" width="3" height="24" /><rect x="-8" y="-6" width="16" height="3" /></g>;
    case "scales":
      return (
        <g transform={at} fill={BROWN} stroke={BROWN}>
          <rect x="-2" y="-22" width="3" height="38" stroke="none" />
          <rect x="-12" y="16" width="24" height="4" stroke="none" />
          <rect x="-20" y="-17" width="39" height="3" stroke="none" />
          <path d="M-13,-15 L-21,3 H-5 Z M13,-15 L5,3 H21 Z" fill="none" strokeWidth="2" />
          <path d="M-22,3 H-4 Q-13,14 -22,3 Z M4,3 H22 Q13,14 4,3 Z" />
        </g>
      );
    case "book":
      return (
        <g transform={at} fill={BROWN}>
          <path d="M-20,-16 C-10,-20 -4,-17 -1,-13 V16 C-6,12 -12,11 -20,13 Z M1,-13 C4,-17 10,-20 20,-16 V13 C12,11 6,12 1,16 Z" />
          <path d="M-22,-12 V17 H22 V-12" fill="none" stroke={BROWN} strokeWidth="2.5" />
        </g>
      );
    case "masks":
      return (
        <g transform={at}>
          <path d="M-20,-17 H4 V3 C4,12 -4,17 -8,17 C-13,17 -20,10 -20,2 Z" fill="#fff" stroke={BROWN} strokeWidth="3" />
          <path d="M-2,-8 H20 V8 C20,16 13,21 9,21 C3,21 -2,14 -2,8 Z" fill={BROWN} />
          <circle cx="4" cy="-1" r="2.5" fill="#fff" /><circle cx="14" cy="-1" r="2.5" fill="#fff" />
          <path d="M3,8 Q9,15 15,8" fill="#fff" />
          <path d="M-15,-9 h6 M-6,-9 h5" stroke={BROWN} strokeWidth="3" />
        </g>
      );
    case "person":
      return (
        <g transform={at} fill={BROWN}>
          <rect x="-9" y="-20" width="18" height="6" />
          <circle cy="-9" r="6" />
          <path d="M-14,-3 H14 V20 H-14 Z" />
          <path d="M-14,14 L14,-1" stroke="#f2efe9" strokeWidth="3" />
        </g>
      );
    case "monument":
      return (
        <g transform={at} fill={BROWN}>
          <circle cy="-18" r="3" />
          <path d="M-4,-15 H4 L6,12 H-6 Z" />
          <rect x="-11" y="8" width="22" height="5" />
          <rect x="-19" y="14" width="38" height="4" />
        </g>
      );
    case "castle":
      return (
        <g transform={at} fill={BROWN}>
          <path d="M-21,-15 h5 v3 h4 v-3 h5 V-3 H7 V-15 h5 v3 h4 v-3 h5 V16 H6 V6 A6,6 0 0 0 -6,6 V16 H-21 Z" />
        </g>
      );
    case "vase":
      return (
        <g transform={at}>
          <ellipse rx="33" ry="24" fill="#c9e6a8" />
          <path d="M-10,-18 H10 L5,-10 C14,-5 12,8 6,15 V20 H-6 V15 C-12,8 -14,-5 -5,-10 Z" fill={BROWN} />
          <path d="M-13,-14 H-18 V-2 M13,-14 H18 V-2" fill="none" stroke={BROWN} strokeWidth="3" />
        </g>
      );
    case "film":
      return (
        <g transform={at}>
          <path fillRule="evenodd" d="M-21,-18 H21 V18 H-21 Z M-12,-12 V-4 H12 V-12 Z M-12,3 V12 H12 V3 Z M-19,-15 V-10 H-15 V-15 Z M15,-15 V-10 H19 V-15 Z M-19,-5 V0 H-15 V-5 Z M15,-5 V0 H19 V-5 Z M-19,6 V11 H-15 V6 Z M15,6 V11 H19 V6 Z" fill={BROWN} />
        </g>
      );
    case "temple":
      return (
        <g transform={at} fill={BROWN}>
          <path d="M0,-18 L20,-7 V-3 H-20 V-7 Z" />
          <rect x="-17" y="0" width="6" height="12" /><rect x="-3" y="0" width="6" height="12" /><rect x="11" y="0" width="6" height="12" />
          <rect x="-20" y="13" width="40" height="5" />
        </g>
      );
    case "cart":
      return (
        <g transform={at} fill="none" stroke="#ac39ac" strokeWidth="3">
          <path d="M20,-17 L13,-13 L9,7 H-15 L-19,-10 H12" />
          <path d="M-17,-3 H11 M-14,3 H9 M-10,-10 V7 M-3,-10 V7 M4,-10 V7" strokeWidth="2" />
          <circle cx="-11" cy="13" r="2.5" /><circle cx="6" cy="13" r="2.5" />
        </g>
      );
    case "hut":
      return (
        <g transform={at} fill="none" stroke="#555" strokeWidth="2.5">
          <path d="M-18,-2 L0,-14 L18,-2 M-12,-4 V15 M12,-4 V15" />
          <path d="M-16,-16 L16,-24 M-8,-22 L-4,-14 M4,-24 L8,-16" stroke="#bbb" strokeDasharray="3 2" />
        </g>
      );
    case "sq":
      return <rect x={x - 9} y={y - 9} width="18" height="18" fill="#0092da" />;
    case "st":
      return <rect x={x - 8.5} y={y - 8.5} width="17" height="17" fill="#7981b0" />;
    case "arrow":
    case "navy":
      return (
        <g transform={`${at} rotate(${rot})`} fill="none" stroke={kind === "navy" ? "#0a0a8a" : "#333"} strokeWidth={kind === "navy" ? 4 : 2.5}>
          <path d={kind === "navy" ? "M-14,0 H10" : "M-15,0 H13"} />
          <path d="M4,-7 L16,0 L4,7 Z" fill={kind === "navy" ? "#0a0a8a" : "#333"} stroke="none" />
        </g>
      );
    default:
      return null;
  }
}

const groupT = (q) => `translate(${q.t[0]} ${q.t[1]}) scale(${1 / 3})`;

function Layer({ render }) {
  return QUADS.map((q, i) => (
    <g key={i} transform={groupT(q)}>
      {render(q)}
    </g>
  ));
}

function OsmMap() {
  return (
    <MapArt viewBox="0 0 800 700" aria-label="Map of Olsztyn">
      <rect width="800" height="700" fill="#e0dfdf" />
      <polygon points="0,455 234,327 391,240 558,155 560,172 400,270 300,340 100,445 0,490" fill="#cde8b0" />
      <Layer render={(q) => q.areas.map(([c, p], i) => <polygon key={i} points={p} fill={c} />)} />
      <Layer render={(q) => (q.stream || []).map((p, i) => <Stream key={i} points={p} />)} />
      <Layer render={(q) => q.bld.map(([cx, cy, w, h, a], i) => (
        <Building key={i} x={cx - w / 2} y={cy - h / 2} width={w} height={h} transform={`rotate(${a} ${cx} ${cy})`} />
      ))} />
      {/* castle walls */}
      <g transform={groupT(Q3)} fill="none" stroke="#8a8a8a" strokeWidth="9">
        <path d="M1010,440 L1065,365 L1195,440" />
      </g>
      <Layer render={(q) => q.foot.map((p, i) => <FootCase key={i} points={p} />)} />
      <Layer render={(q) => q.foot.map((p, i) => <Foot key={i} points={p} />)} />
      <Layer render={(q) => (q.faint || []).map((p, i) => <Foot key={i} points={p} $faint />)} />
      <g transform={groupT(Q1)}>
        <River d="M865,30 C862,120 800,170 720,215 C680,255 680,310 745,360 C805,400 820,430 795,480 C745,495 705,520 735,590 C770,660 810,730 850,810 C870,850 895,910 930,960 L965,1025" />
      </g>
      <g transform={groupT(Q3)}>
        <River d="M965,-5 C975,60 1000,100 1005,170 C1015,230 1040,280 1030,340 C1015,400 1000,420 995,480 C985,560 965,620 915,680 C870,710 840,740 845,790 C880,860 960,920 1000,1000 C1015,1050 1020,1090 1020,1125" />
      </g>
      <Layer render={(q) => q.road.map(([w, p], i) => <RoadCase key={i} points={p} strokeWidth={w * 1.15 + 4} />)} />
      <Layer render={(q) => q.road.map(([w, p], i) => <RoadFill key={i} points={p} strokeWidth={w * 1.15} />)} />
      {/* tram line round the old town */}
      <g transform={groupT(Q4)} fill="none">
        <path d="M640,325 C680,315 720,320 760,330 L1000,440 L1227,532" stroke="#6a6a6a" strokeWidth="5" />
        <path d="M640,325 C680,315 720,320 760,330 L1000,440 L1227,532" stroke="#dcdcdc" strokeWidth="1.6" />
        <path d="M430,405 C405,425 405,465 430,520 L495,625" stroke="#6a6a6a" strokeWidth="5" />
        <path d="M430,405 C405,425 405,465 430,520 L495,625" stroke="#dcdcdc" strokeWidth="1.6" />
      </g>
      {/* rail corridor */}
      <g fill="none">
        <path d="M0,462 L234,330 L391,246 L558,155 M0,478 L308,330 L391,276 L558,164 M558,159 L800,67" stroke="#6e6e6e" strokeWidth="9" />
        <path d="M0,460 L234,328 L391,244 L558,153 M0,476 L308,328 L391,274 L558,162 M558,156 L800,65" stroke="#fff" strokeWidth="0.9" strokeDasharray="5 4" />
        <path d="M0,464 L234,332 L391,248 L558,157 M0,480 L308,332 L391,278 L558,166 M558,162 L800,70" stroke="#fff" strokeWidth="0.9" strokeDasharray="5 4" />
      </g>
      <polygon points="556,143 575,141 579,168 564,170" fill="#fff" />
      {/* ring road */}
      <g fill="none" strokeLinejoin="round">
        <path d="M0,442 L391,222 L545,150 C600,125 650,112 668,85 C680,65 685,40 697,0" stroke="#a9aa7c" strokeWidth="15.5" />
        <path d="M0,442 L391,222 L545,150 C600,125 650,112 668,85 C680,65 685,40 697,0" stroke="#f7fabf" strokeWidth="14" />
        <path d="M0,442 L391,222 L545,150" stroke="#9db27a" strokeWidth="0.8" />
        <path d="M0,431 L391,212 L545,141 C600,117 642,105 660,78 C672,58 677,34 688,0" stroke="#1414ee" strokeWidth="1" strokeDasharray="3 2" />
      </g>
      <Layer render={(q) => q.cyc.map((p, i) => <Cycle key={i} points={p} />)} />
      <Layer render={(q) => q.labels.map(([text, x, y, r, k], i) => (
        <MapLabel key={i} $kind={k} x={x} y={y} transform={r ? `rotate(${r} ${x} ${y})` : undefined}>{text}</MapLabel>
      ))} />
      <Layer render={(q) => q.pees.map(([x, y], i) => <Pee key={i} x={x} y={y}>P</Pee>)} />
      <Layer render={(q) => q.icons.map(([k, x, y, r], i) => <Icon key={i} kind={k} x={x} y={y} rot={r} />)} />
    </MapArt>
  );
}

function Marker({ id, x, y, from, to, edge }) {
  return (
    <Pin $x={x} $y={y} viewBox="0 0 45 41">
      <defs>
        <linearGradient id={id} x1="0" y1="0" x2="0" y2="1">
          <stop offset="0" stopColor={from} />
          <stop offset="1" stopColor={to} />
        </linearGradient>
        <filter id={`${id}b`} x="-50%" y="-50%" width="200%" height="200%">
          <feGaussianBlur stdDeviation="2.2" />
        </filter>
      </defs>
      <ellipse cx="23" cy="30" rx="9" ry="6" fill="#000" opacity="0.38" transform="skewX(-28) translate(14 0)" filter={`url(#${id}b)`} />
      <path d="M12.5,0.6 C5.9,0.6 0.6,5.9 0.6,12.5 C0.6,21 12.5,40.4 12.5,40.4 C12.5,40.4 24.4,21 24.4,12.5 C24.4,5.9 19.1,0.6 12.5,0.6 Z" fill={`url(#${id})`} stroke={edge} strokeWidth="0.8" />
      <circle cx="12.5" cy="12.5" r="4.4" fill="#fff" />
    </Pin>
  );
}

const MARKERS = [
  { id: "m8", x: 538, y: 427, from: "#4a4a4a", to: "#2e2e2e", edge: "#333" },
  { id: "m1", x: 606, y: 222, from: "#3f92cc", to: "#2478bf", edge: "#2a6fa6" },
  { id: "m2", x: 439, y: 285, from: "#35b333", to: "#209a1e", edge: "#1f8a1d" },
  { id: "m3", x: 275, y: 394, from: "#a03fd0", to: "#8a22bd", edge: "#7b1faa" },
  { id: "m4", x: 479, y: 381, from: "#3f92cc", to: "#2478bf", edge: "#2a6fa6" },
  { id: "m5", x: 517, y: 442, from: "#d08a33", to: "#bf7a20", edge: "#a96c1c" },
  { id: "m6", x: 443, y: 481, from: "#4a4a4a", to: "#2e2e2e", edge: "#2a2a2a" },
  { id: "m7", x: 590, y: 463, from: "#cec738", to: "#bdb71c", edge: "#a9a41c" },
];

const AMENITIES = [
  ["Uniwersytecki Szpital Kliniczny", "Hospital", "1.34", "5"],
  ["Méxicana", "Restaurant", "0.38", "2"],
  ["Euronet", "ATM", "0.17", "1"],
  ["Biedronka", "Supermarket", "0.39", "2"],
  ["Warmińsko-Mazurska Biblioteka Pedagogiczna im. Prof. Tadeusza Kotarbińskiego", "Library", "0.43", "2"],
  ["II Liceum Ogólnokształcące im. K. I. Gałczyńskiego", "School", "0.43", "3"],
  ["Kaplica domowa", "Place of Worship", "0.11", "0"],
  ["Awangarda 2", "Cinema", "0.27", "2"],
];

export default function App() {
  return (
    <>
      <Global />
      <Page>
        <MapFrame>
          <OsmMap />
          {MARKERS.map((m) => <Marker key={m.id} {...m} />)}
          <Popup>
            Awangarda 2
            <CloseX viewBox="0 0 9 9"><path d="M0.5,0.5 L8.5,8.5 M8.5,0.5 L0.5,8.5" stroke="#757575" strokeWidth="1.1" /></CloseX>
          </Popup>
          <ZoomBox>
            <ZoomBtn $first>+</ZoomBtn>
            <ZoomBtn>−</ZoomBtn>
          </ZoomBox>
          <Attribution>
            <Flag viewBox="0 0 12 8"><rect width="12" height="4" fill="#4c7be1" /><rect y="4" width="12" height="4" fill="#ffd500" /></Flag>
            <AttrLink>Leaflet</AttrLink> | © <AttrLink>OpenStreetMap</AttrLink> contributors
          </Attribution>
        </MapFrame>
        <Side>
          <FindButton>🔍 Find amenities</FindButton>
          <Heading $top={20} $bottom={29}>Amenities nearby (8/8):</Heading>
          <List>
            {AMENITIES.map(([name, type, km, min]) => (
              <Item key={name}>
                <Name>{name}</Name> ({type})
                <br />
                📌 {km} km | ⏳ {min} min.
              </Item>
            ))}
          </List>
          <Heading $top={24} $bottom={0}>Missing amenities:</Heading>
        </Side>
      </Page>
    </>
  );
}
